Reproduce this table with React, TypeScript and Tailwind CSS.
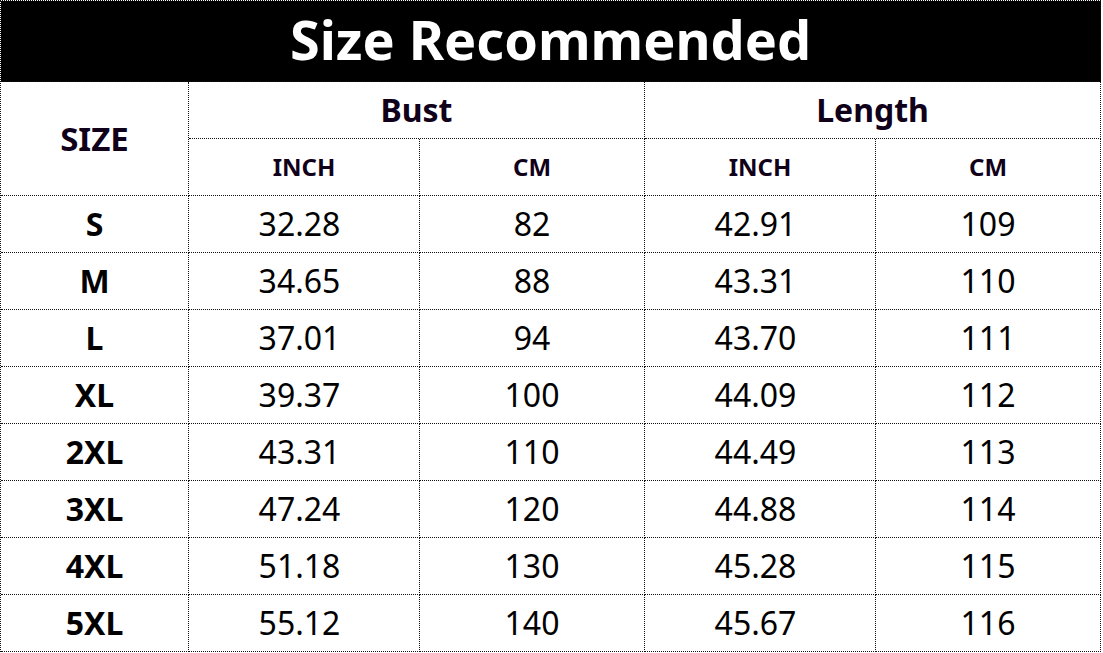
const ROWS: [string, string, string, string, string][] = [
  ['S', '32.28', '82', '42.91', '109'],
  ['M', '34.65', '88', '43.31', '110'],
  ['L', '37.01', '94', '43.70', '111'],
  ['XL', '39.37', '100', '44.09', '112'],
  ['2XL', '43.31', '110', '44.49', '113'],
  ['3XL', '47.24', '120', '44.88', '114'],
  ['4XL', '51.18', '130', '45.28', '115'],
  ['5XL', '55.12', '140', '45.67', '116'],
]

const cell = 'flex items-center justify-center border-r border-b border-dotted border-[#111]'

export default function App() {
  return (
    <div className="w-[1103px] h-[653px] bg-white" style={{ fontFamily: '"Noto Sans", "Open Sans", sans-serif' }}>
      <div className="grid w-[1101px] grid-cols-[188px_231px_225px_231px_225px] grid-rows-[81px_57px_57px_repeat(8,57px)] border-l border-t border-dotted border-[#111]">
        <div className={`${cell} col-span-5 bg-black text-white text-[54px] font-bold leading-none pb-1`}>
          Size Recommended
        </div>

        <div className={`${cell} row-span-2 text-[33px] font-bold text-[#10001a]`}>SIZE</div>
        <div className={`${cell} col-span-2 text-[32px] font-bold text-[#10001a]`}>Bust</div>
        <div className={`${cell} col-span-2 text-[32px] font-bold text-[#10001a]`}>Length</div>
        <div className={`${cell} text-[24px] font-bold text-[#10001a]`}>INCH</div>
        <div className={`${cell} text-[24px] font-bold text-[#10001a]`}>CM</div>
        <div className={`${cell} text-[24px] font-bold text-[#10001a]`}>INCH</div>
        <div className={`${cell} text-[24px] font-bold text-[#10001a]`}>CM</div>

        {ROWS.map(row => (
          <div key={row[0]} className="contents">
            <div className={`${cell} text-[32px] font-bold text-black`}>{row[0]}</div>
            <div className={`${cell} pr-[9px] text-[32px] text-black`}>{row[1]}</div>
            <div className={`${cell} text-[32px] text-black`}>{row[2]}</div>
            <div className={`${cell} pr-[9px] text-[32px] text-black`}>{row[3]}</div>
            <div className={`${cell} text-[32px] text-black`}>{row[4]}</div>
          </div>
        ))}
      </div>
    </div>
  )
}
